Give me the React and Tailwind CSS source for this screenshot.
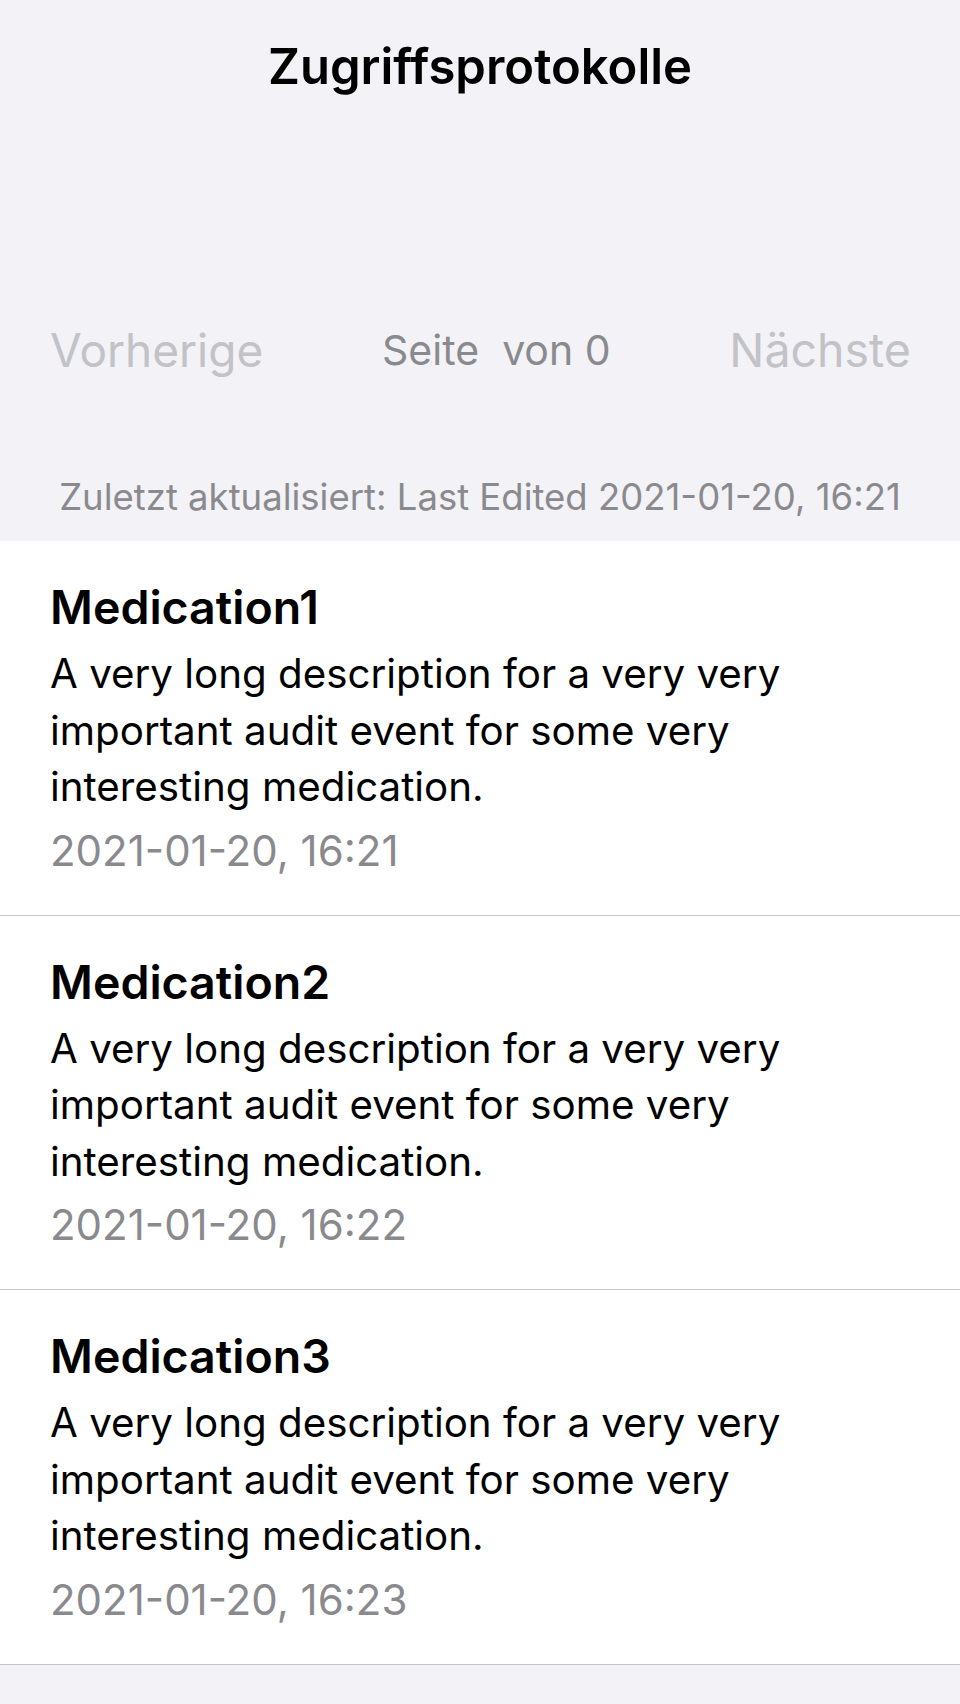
const items = [
  { name: 'Medication1', time: '2021-01-20, 16:21' },
  { name: 'Medication2', time: '2021-01-20, 16:22' },
  { name: 'Medication3', time: '2021-01-20, 16:23' }
];

const description =
  'A very long description for a very very important audit event for some very interesting medication.';

function AuditRow({ name, time }) {
  return (
    <div className="bg-white border-b border-[#c6c6c8] pl-[50px] pr-[40px] pt-[38px] pb-[36px]">
      <div className="text-[46.5px] leading-[56px] font-semibold text-black">{name}</div>
      <p className="mt-[11px] text-[40.3px] leading-[56.5px] text-black max-w-[800px]">{description}</p>
      <div className="mt-[7px] text-[42px] leading-[56px] text-[#8a8a8e]">{time}</div>
    </div>
  );
}

export default function App() {
  return (
    <div
      className="min-h-screen w-full bg-[#f2f2f7]"
      style={{ fontFamily: 'Inter, "Noto Sans", sans-serif' }}
    >
      <div className="h-[541px] flex flex-col">
        <h1 className="pt-[38px] text-center text-[49px] leading-[58px] font-semibold text-black">
          Zugriffsprotokolle
        </h1>

        {/* pagination */}
        <div className="mt-[226px] flex items-center justify-between pl-[50px] pr-[49px]">
          <button className="text-[46px] leading-[56px] text-[#c2c2c7]">Vorherige</button>
          <span className="text-[41px] leading-[56px] text-[#8a8a8e]">
            Seite&nbsp;&nbsp;von 0
          </span>
          <button className="text-[46.5px] leading-[56px] text-[#c2c2c7]">Nächste</button>
        </div>

        <p className="mt-[97px] text-center text-[36.5px] leading-[44px] text-[#8a8a8e]">
          Zuletzt aktualisiert: Last Edited 2021-01-20, 16:21
        </p>
      </div>

      <div>
        {items.map((item) => (
          <AuditRow key={item.name} name={item.name} time={item.time} />
        ))}
      </div>
    </div>
  );
}
